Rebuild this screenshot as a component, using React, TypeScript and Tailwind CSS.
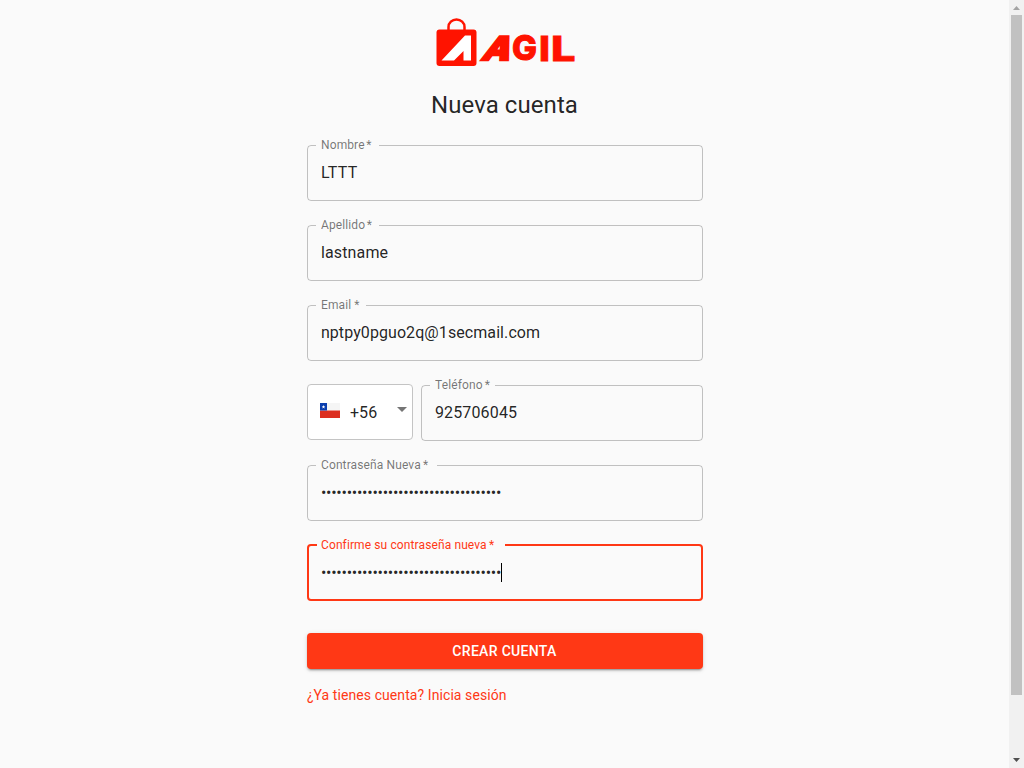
type FieldProps = {
  label: string;
  value: string;
  legend: string;
  type?: string;
  focused?: boolean;
  mark?: string;
  spacing?: string;
};

const SECRET = "abcdefghijklmnopqrstuvwxyz123456789";

function Field({
  label,
  value,
  legend,
  type = "text",
  focused = false,
  mark = "ml-1",
  spacing = "tracking-[0.00938em]",
}: FieldProps) {
  return (
    <div className="relative h-14 w-full">
      <label
        className={`absolute left-[14px] -top-[6px] flex origin-top-left scale-75 whitespace-nowrap text-base leading-none tracking-[0.00938em] ${
          focused ? "text-[#ff3815]" : "text-black/54"
        }`}
      >
        {label}
        <span className={mark}>*</span>
      </label>
      <input
        type={type}
        defaultValue={value}
        className={`h-14 w-full bg-transparent pt-[17.5px] pb-[19.5px] pl-[14.4px] pr-[14px] text-base leading-[19px] text-black/87 outline-none ${spacing}`}
      />
      <fieldset
        className={`pointer-events-none absolute inset-x-0 bottom-0 rounded px-2 ${
          focused ? "-top-[6px] border-2 border-[#ff3815]" : "-top-[5px] border border-black/23"
        }`}
      >
        <legend className={`h-[11px] ${legend}`} />
      </fieldset>
      {focused && <span className="absolute left-[194px] top-[18px] h-[19px] w-px bg-black" />}
    </div>
  );
}

function Logo() {
  return (
    <svg className="relative left-px" width="140" height="50" viewBox="436 17 140 50" role="img" aria-label="Agil">
      <path d="M448.500 31V27a8 7.500 0 0 1 16 0v4" fill="none" stroke="#ff1300" strokeWidth="2.500" />
      <rect x="436.500" y="29.500" width="40" height="36.500" rx="3" fill="#ff1300" />
      <path d="M441.500 60.500L465 35.500H471V60.500H463.500V51L454 60.500Z" fill="#fff" />
      <g fill="#ff1300" stroke="#ff1300" fontFamily="Inter, sans-serif" fontWeight="800" fontSize="34">
        <text transform="translate(480.500 59.600) skewX(-22)" fontSize="32.500" textLength="28" lengthAdjust="spacingAndGlyphs" strokeWidth="2.400">A</text>
        <text x="512" y="60.200" fontSize="34" textLength="25" lengthAdjust="spacingAndGlyphs" strokeWidth="1">G</text>
        <text x="539" y="60.500" textLength="11" lengthAdjust="spacingAndGlyphs" strokeWidth="0.800">I</text>
        <text x="551" y="60.500" textLength="24.500" lengthAdjust="spacingAndGlyphs" strokeWidth="0.800">L</text>
      </g>
    </svg>
  );
}

function ChileFlag() {
  return (
    <svg width="20" height="15" viewBox="0 0 20 15">
      <path d="M0 0h20v7.500H0z" fill="#f5f5f5" />
      <path d="M0 7.500h20V15H0z" fill="#dc2f20" />
      <path d="M0 0h7v7.500H0z" fill="#0b3eae" />
      <path d="M3.500 2l.5 1.200 1.300.1-1 .8.300 1.300-1.100-.7-1.100.7.300-1.300-1-.8 1.300-.1z" fill="#fff" />
    </svg>
  );
}

export default function App() {
  return (
    <div className="flex h-screen overflow-hidden bg-[#fafafa] font-[Roboto,sans-serif]">
      <main className="flex flex-1 justify-center">
        <div className="flex w-[396px] flex-col">
          <div className="flex h-[67px] justify-center pt-[17px]">
            <Logo />
          </div>
          <h1 className="mt-[22px] text-center text-2xl leading-8 tracking-[0.07px] text-black/87">Nueva cuenta</h1>
          <form className="mt-6 flex flex-col gap-6">
            <Field label="Nombre" value="LTTT" legend="w-[63px]" mark="ml-[2px]" spacing="tracking-[0.35px]" />
            <Field label="Apellido" value="lastname" legend="w-[63px]" mark="ml-[2px]" />
            <Field label="Email" value="nptpy0pguo2q@1secmail.com" legend="w-[50px]" spacing="tracking-[0.08px]" />
            <div className="flex gap-2">
              <div className="-mt-px flex h-14 w-[106px] shrink-0 items-center rounded border border-[#c4c4c4] bg-white pl-3 pr-[5px]">
                <div className="-mt-1">
                  <ChileFlag />
                </div>
                <span className="ml-[10.4px] text-base leading-[19px] tracking-[0.00938em] text-black/87">+56</span>
                <svg className="-mt-[6px] ml-auto" width="10" height="5" viewBox="0 0 10 5">
                  <path d="M0 0h10L5 5z" fill="#757575" />
                </svg>
              </div>
              <Field label="Teléfono" value="925706045" legend="w-[65px]" mark="ml-[3px]" />
            </div>
            <Field label="Contraseña Nueva" value={SECRET} legend="w-[121px]" type="password" mark="ml-[3px]" spacing="tracking-[-0.25px]" />
            <Field
              label="Confirme su contraseña nueva"
              value={SECRET}
              legend="w-[188px]"
              type="password"
              mark="ml-[3px]"
              spacing="tracking-[-0.25px]"
              focused
            />
            <button
              type="button"
              className="mt-2 h-9 w-full rounded bg-[#ff3815] text-sm font-medium uppercase leading-6 tracking-[0.32px] text-white shadow-[0_3px_1px_-2px_rgba(0,0,0,0.2),0_2px_2px_0_rgba(0,0,0,0.14),0_1px_5px_0_rgba(0,0,0,0.12)]"
            >
              Crear cuenta
            </button>
          </form>
          <a className="mt-4 pl-[0.4px] text-sm leading-5 tracking-[0.08px] text-[#ff3815]">¿Ya tienes cuenta? Inicia sesión</a>
        </div>
      </main>
      <div className="flex w-[15px] flex-col items-center bg-[#f1f1f1]">
        <svg width="15" height="15" viewBox="0 0 15 15">
          <path d="M4 10h7L7.500 6z" fill="#a3a3a3" />
        </svg>
        <div className="h-[680px] w-[11px] bg-[#c1c1c1]" />
        <svg className="mt-auto" width="15" height="15" viewBox="0 0 15 15">
          <path d="M4 5h7L7.500 9z" fill="#505050" />
        </svg>
      </div>
    </div>
  );
}
